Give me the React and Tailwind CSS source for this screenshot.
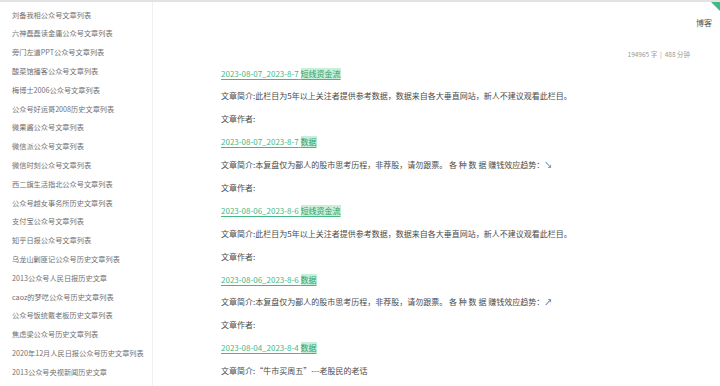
import React from 'react';

const sidebar = [
  '刘备我相公众号文章列表',
  '六神磊磊读金庸公众号文章列表',
  '旁门左道PPT公众号文章列表',
  '酸菜馆播客公众号文章列表',
  '梅博士2006公众号文章列表',
  '公众号好运哥2008历史文章列表',
  '微果酱公众号文章列表',
  '微信派公众号文章列表',
  '微信时刻公众号文章列表',
  '西二旗生活指北公众号文章列表',
  '公众号越女事务所历史文章列表',
  '支付宝公众号文章列表',
  '知乎日报公众号文章列表',
  '乌龙山剿匪记公众号历史文章列表',
  '2013公众号人民日报历史文章',
  'caoz的梦呓公众号历史文章列表',
  '公众号饭统戴老板历史文章列表',
  '焦虑梁公众号历史文章列表',
  '2020年12月人民日报公众号历史文章列表',
  '2013公众号央视新闻历史文章',
];

const fundDesc = '文章简介:此栏目为5年以上关注者提供参考数据，数据来自各大垂直网站，新人不建议观看此栏目。';
const dataDesc = (arrow) => `文章简介:本复盘仅为鄙人的股市思考历程，非荐股，请勿跟票。 各 种 数 据 赚钱效应趋势：${arrow}`;

const posts = [
  { date: '2023-08-07_2023-8-7', tag: '短线资金流', desc: fundDesc },
  { date: '2023-08-07_2023-8-7', tag: '数据', desc: dataDesc('↘') },
  { date: '2023-08-06_2023-8-6', tag: '短线资金流', desc: fundDesc },
  { date: '2023-08-06_2023-8-6', tag: '数据', desc: dataDesc('↗') },
  { date: '2023-08-04_2023-8-4', tag: '数据', desc: '文章简介:“牛市买周五”---老股民的老话', last: true },
];

export default function App() {
  return (
    <div className="relative w-[720px] h-[386px] overflow-hidden bg-white border-t-2 border-[#e2e2e2] flex font-['Noto_Sans_CJK_SC','Noto_Sans',sans-serif]">
      {/* corner ribbon */}
      <svg className="absolute top-[-2px] right-0" width="12" height="12" viewBox="0 0 12 12">
        <polygon points="1,0 12,0 12,11" fill="#42b983" />
      </svg>

      <aside className="w-[153px] shrink-0 border-r border-[#f0f0f0] pt-[3.6px] pl-[12px]">
        {sidebar.map((s) => (
          <div key={s} className="h-[18.8px] leading-[18.8px] text-[7.2px] text-[#707070] whitespace-nowrap">
            {s}
          </div>
        ))}
      </aside>

      <main className="flex-1 pl-[68px]">
        <div className="pt-[15px] pr-[8px] text-right leading-[12px] text-[8px] text-[#555]">博客</div>
        <div className="mt-[20px] pr-[30px] text-right leading-[10px] text-[6.5px] text-[#999]">
          194965 字 &nbsp;|&nbsp; 488 分钟
        </div>
        <div className="mt-[3.5px] text-[8px] text-[#4a4a4a]">
          {posts.map((p, i) => (
            <div key={i}>
              <div className="h-[22.9px] leading-[22.9px] whitespace-nowrap">
                <span className="text-[#42b983] underline underline-offset-2">
                  {p.date} <span className="bg-[#c9eed9] text-[#2f9e6c]">{p.tag}</span>
                </span>
              </div>
              <div className="h-[22.9px] leading-[22.9px] whitespace-nowrap">{p.desc}</div>
              {!p.last && <div className="h-[22.9px] leading-[22.9px]">文章作者:</div>}
            </div>
          ))}
        </div>
      </main>
    </div>
  );
}
